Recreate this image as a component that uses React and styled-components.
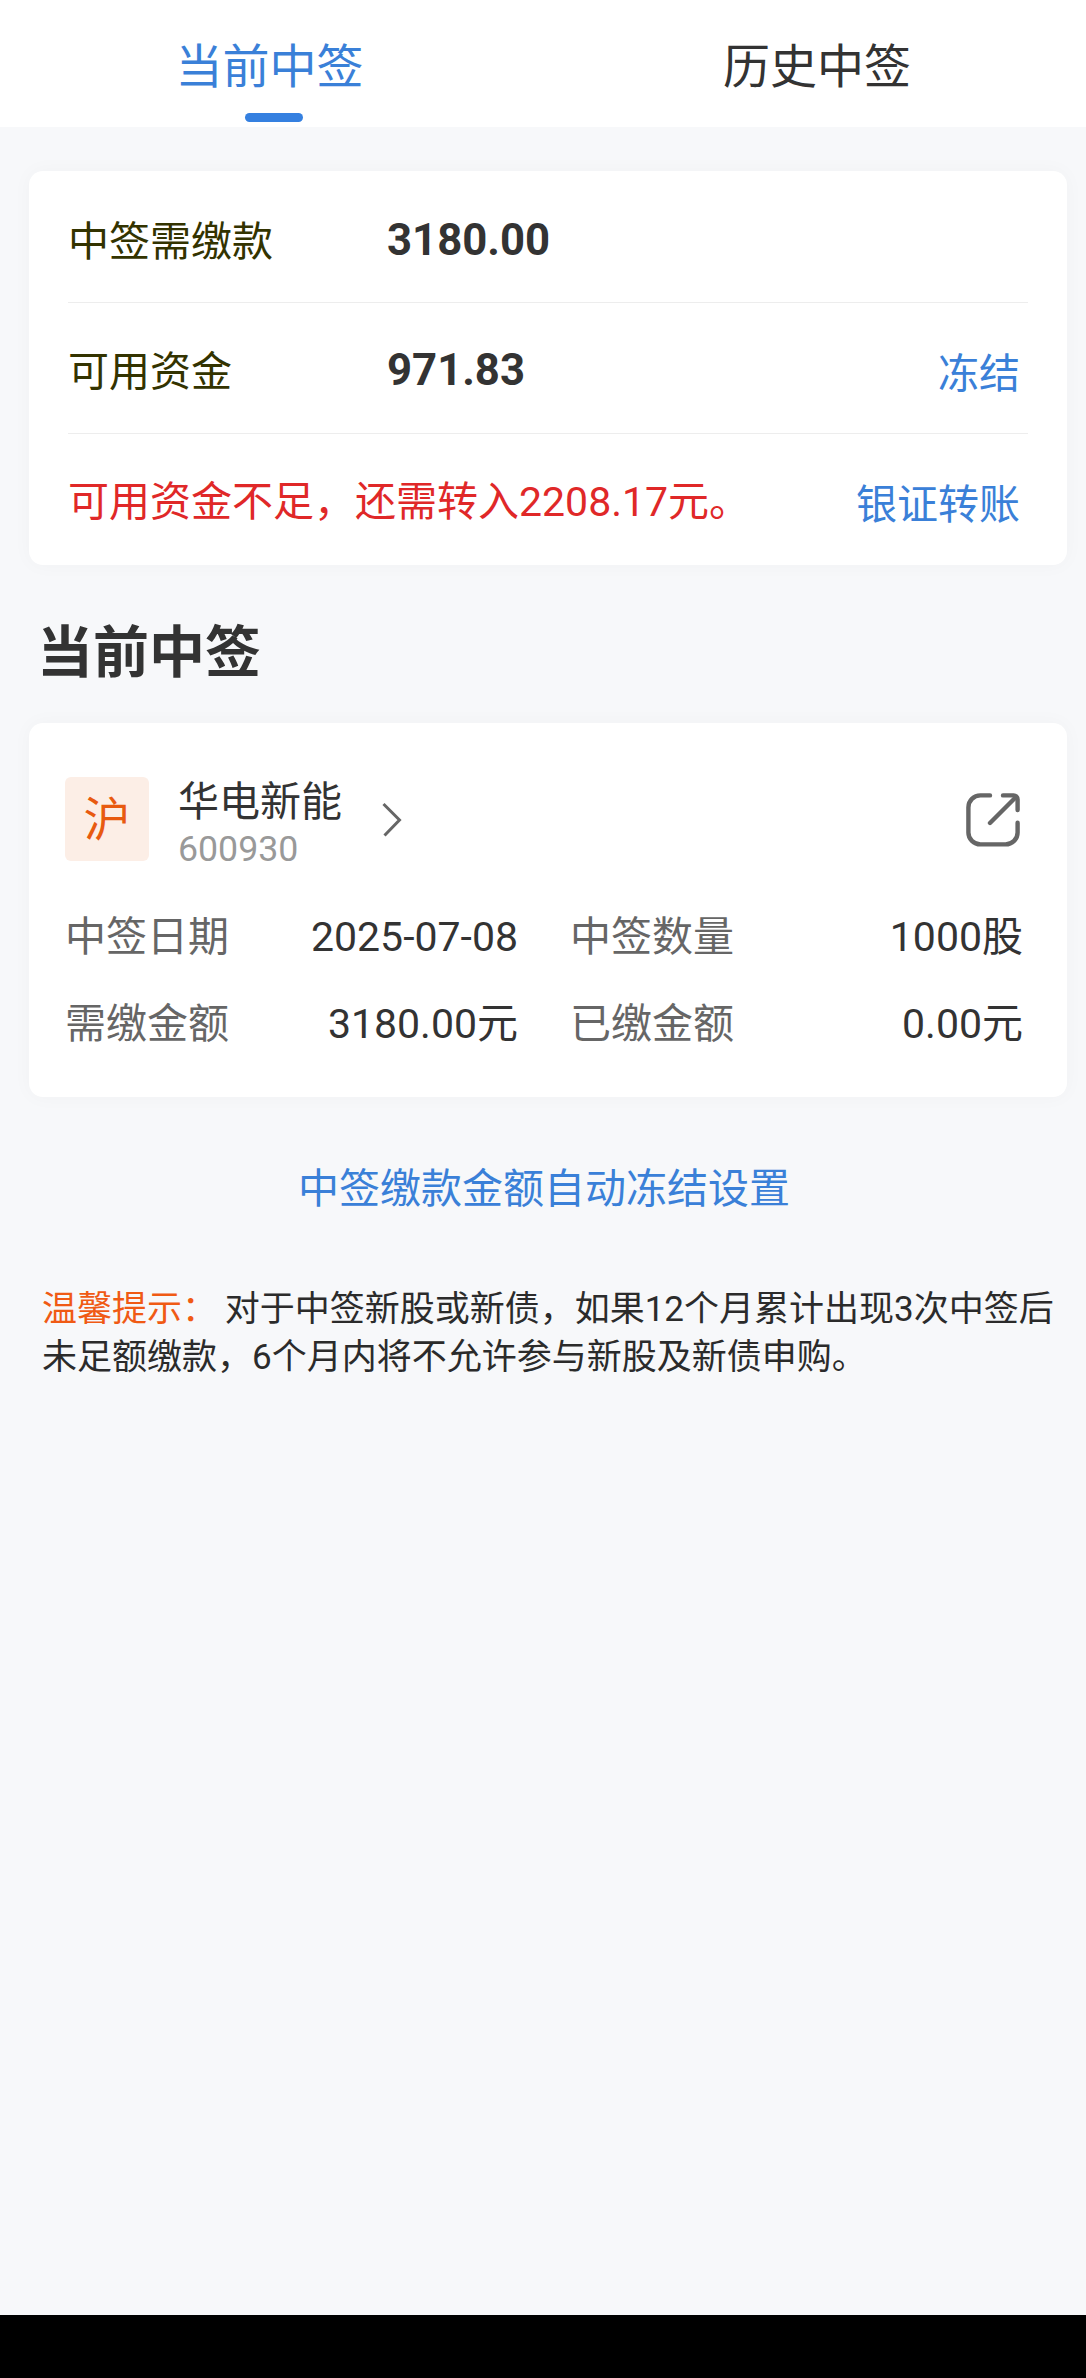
import React from 'react';
import styled, { createGlobalStyle } from "styled-components";

const color = {
    blue: "#3580e0",
    link: "#3a80d8",
    red: "#e02828",
    orange: "#e85a10",
    tip: "#f05a14",
    text: "#333333",
    grey: "#666666",
    lightgrey: "#999999",
    label: "#333300",
    line: "#ededed",
    background: "#f7f8fa"
}

const GlobalStyle = createGlobalStyle`
    * {
        box-sizing: border-box;
    }

    body {
        margin: 0;
        background: ${color.background};
        color: ${color.text};
        font-family: Roboto, "Noto Sans CJK SC", sans-serif;
        font-size: 41px;
        line-height: 60px;
    }
`

const Page = styled.div`
    display: flex;
    flex-direction: column;
    height: 2378px;
`

const TabBar = styled.nav`
    display: grid;
    grid-template-columns: 539px 538px;
    column-gap: 9px;
    height: 127px;
    background: #fff;
`

const Tab = styled.div`
    display: flex;
    flex-direction: column;
    align-items: center;
    padding-top: 34px;
    font-size: 47px;
    line-height: 66px;
    color: ${props => props.$active ? color.link : color.text};

    &::after {
        content: "";
        width: 58px;
        height: 9px;
        margin: 13px 0 0 8px;
        border-radius: 5px;
        background: ${props => props.$active ? color.blue : "transparent"};
    }
`

const Card = styled.section`
    margin: 0 19px 0 29px;
    background: #fff;
    border-radius: 14px;
    box-shadow: 0 0 20px rgba(0, 0, 0, 0.03);
`

const FundsCard = styled(Card)`
    height: 394px;
    margin-top: 44px;
    padding: 0 39px;
`

const FundsRow = styled.div`
    display: flex;
    height: 131px;
    padding: 38px 8px 0 0;

    &:first-child {
        padding-top: 40px;
    }

    & + & {
        border-top: 1px solid ${color.line};
    }
`

const FundsLabel = styled.span`
    width: 319px;
    padding-top: 1px;
    color: ${color.label};
`

const FundsValue = styled.span`
    margin-top: -1px;
    font-size: 43.7px;
    font-weight: 700;
`

const Warning = styled.span`
    color: ${color.red};
`

const Action = styled.a`
    margin: 3px 0 0 auto;
    color: ${color.link};
`

const Title = styled.h2`
    margin: 48px 0 30px 37px;
    font-size: 56px;
    font-weight: 700;
    line-height: 80px;
`

const StockCard = styled(Card)`
    height: 374px;
    padding: 54px 44px 0 36px;
`

const StockHeader = styled.header`
    display: flex;
    align-items: flex-start;
    height: 130px;
`

const Market = styled.span`
    width: 84px;
    height: 84px;
    border-radius: 6px;
    background: #fceee6;
    color: ${color.orange};
    font-size: 47px;
    line-height: 85px;
    text-align: center;
`

const StockName = styled.div`
    width: 204px;
    margin: 1px 0 0 29px;
    line-height: 48px;
`

const StockCode = styled.div`
    padding-top: 1px;
    color: ${color.lightgrey};
    font-size: 35.7px;
    line-height: 44px;
`

const Chevron = styled.svg`
    width: 20px;
    height: 36px;
    margin-top: 25px;
`

const ShareIcon = styled.svg`
    width: 54px;
    height: 54px;
    margin: 16px 3px 0 auto;
`

const Details = styled.dl`
    display: grid;
    grid-template-columns: 453px 453px;
    column-gap: 52px;
    row-gap: 27px;
    margin: 0;
`

const Detail = styled.div`
    display: flex;
    justify-content: space-between;
`

const DetailLabel = styled.dt`
    color: ${color.grey};
`

const DetailValue = styled.dd`
    margin: 0;
`

const SettingLink = styled.a`
    margin: 62px 0 0 2px;
    color: ${color.link};
    text-align: center;
`

const Tip = styled.p`
    margin: 67px 30px 0 42px;
    color: #2b2b2b;
    font-size: 35px;
    line-height: 48px;
`

const TipTitle = styled.span`
    margin-right: -1px;
    color: ${color.tip};
`

const NavigationBar = styled.div`
    height: 63px;
    margin-top: auto;
    background: #000;
`

const tabs = ["当前中签", "历史中签"]

const details = [
    { libelle: "中签日期", valeur: "2025-07-08" },
    { libelle: "中签数量", valeur: "1000股" },
    { libelle: "需缴金额", valeur: "3180.00元" },
    { libelle: "已缴金额", valeur: "0.00元" }
]

class App extends React.Component {
    state = {
        tab: 0
    }

    displayFunds = () => {
        return <FundsCard>
            <FundsRow>
                <FundsLabel>中签需缴款</FundsLabel>
                <FundsValue>3180.00</FundsValue>
            </FundsRow>
            <FundsRow>
                <FundsLabel>可用资金</FundsLabel>
                <FundsValue>971.83</FundsValue>
                <Action>冻结</Action>
            </FundsRow>
            <FundsRow>
                <Warning>可用资金不足，还需转入2208.17元。</Warning>
                <Action>银证转账</Action>
            </FundsRow>
        </FundsCard>
    }

    displayStock = () => {
        return <StockCard>
            <StockHeader>
                <Market>沪</Market>
                <StockName>
                    华电新能
                    <StockCode>600930</StockCode>
                </StockName>
                <Chevron viewBox="0 0 20 36" fill="none" stroke={color.grey} strokeWidth="3">
                    <path d="M1.5 2 L17.5 18 L2.5 33.5" />
                </Chevron>
                <ShareIcon viewBox="0 0 54 54" fill="none" stroke={color.grey} strokeWidth="4.4" strokeLinecap="round" strokeLinejoin="round">
                    <path d="M24 2.4 H14.4 A12 12 0 0 0 2.4 14.4 V39.4 A12 12 0 0 0 14.4 51.4 H39.6 A12 12 0 0 0 51.6 39.4 V29.8" />
                    <path d="M37 2.4 H47.6 A4 4 0 0 1 51.6 6.4 V17" />
                    <path d="M24 30 L50 4" />
                </ShareIcon>
            </StockHeader>
            <Details>
                {details.map((d, index) => (
                    <Detail key={index}>
                        <DetailLabel>{d.libelle}</DetailLabel>
                        <DetailValue>{d.valeur}</DetailValue>
                    </Detail>
                ))}
            </Details>
        </StockCard>
    }

    render() {
        return (
            <Page>
                <GlobalStyle />
                <TabBar>
                    {tabs.map((t, index) => (
                        <Tab key={index} $active={this.state.tab === index} onClick={() => this.setState({ tab: index })}>
                            {t}
                        </Tab>
                    ))}
                </TabBar>
                {this.displayFunds()}
                <Title>当前中签</Title>
                {this.displayStock()}
                <SettingLink>中签缴款金额自动冻结设置</SettingLink>
                <Tip>
                    <TipTitle>温馨提示：</TipTitle> 对于中签新股或新债，如果12个月累计出现3次中签后未足额缴款，6个月内将不允许参与新股及新债申购。
                </Tip>
                <NavigationBar />
            </Page>
        )
    }
}

export default App
